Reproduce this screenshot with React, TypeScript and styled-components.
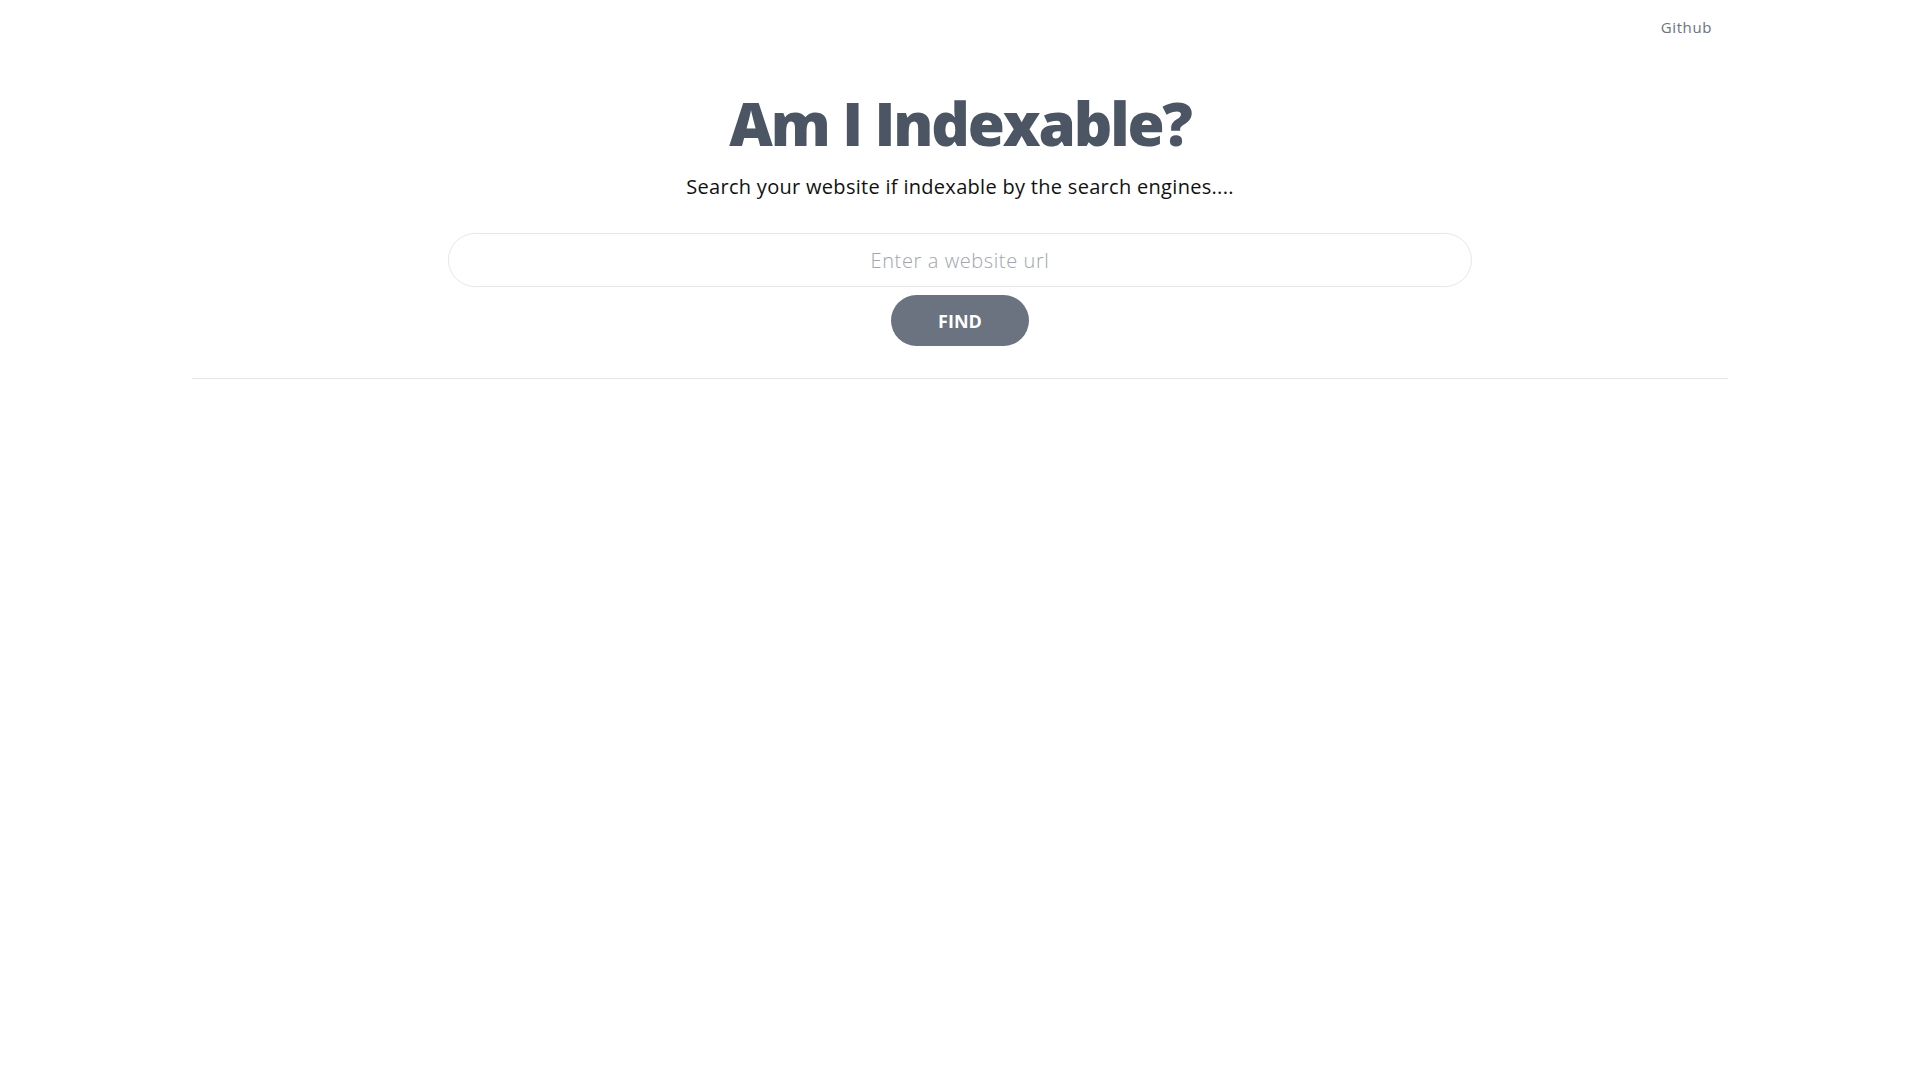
import React, { useState } from 'react'
import styled, { createGlobalStyle } from 'styled-components'

const GlobalStyle = createGlobalStyle`
  html, body {
    margin: 0;
    padding: 0;
    background: #ffffff;
    font-family: "Open Sans", "Noto Sans", sans-serif;
  }
  * {
    box-sizing: border-box;
  }
`

const Container = styled.div`
  width: 100%;
  max-width: 1536px;
  margin: 0 auto;
`

const Nav = styled(Container)`
  display: flex;
  justify-content: flex-end;
  padding: 15px 16px 0;
`

const NavLink = styled.a`
  color: #6b7280;
  font-size: 15px;
  line-height: 24px;
  letter-spacing: 0.04em;
  text-decoration: none;
`

const Hero = styled(Container)`
  display: flex;
  flex-direction: column;
  align-items: center;
  padding: 52px 16px 32px;
  border-bottom: 1px solid #e5e7eb;
`

const Title = styled.h1`
  margin: 0;
  color: #4b5563;
  font-size: 60px;
  font-weight: 800;
  line-height: 65px;
  letter-spacing: -0.035em;
`

const Subtitle = styled.p`
  margin: 17px 0 0;
  color: #111111;
  font-size: 20px;
  line-height: 28px;
  letter-spacing: 0.015em;
`

const SearchForm = styled.form`
  display: flex;
  flex-direction: column;
  align-items: center;
  gap: 8px;
  width: 100%;
  margin-top: 32px;
`

const UrlInput = styled.input`
  width: 1024px;
  height: 54px;
  padding: 0 24px;
  border: 1px solid #e5e7eb;
  border-radius: 9999px;
  outline: none;
  text-align: center;
  font-family: inherit;
  font-size: 20px;
  letter-spacing: 0.03em;
  color: #374151;

  &::placeholder {
    color: #a1a5ad;
    font-weight: 300;
  }
`

const FindButton = styled.button`
  width: 138px;
  height: 51px;
  border: none;
  border-radius: 9999px;
  background: #6b7280;
  color: #ffffff;
  font-family: inherit;
  font-size: 18px;
  font-weight: 700;
  cursor: pointer;
`

export default function App() {
  const [url, setUrl] = useState('')

  return (
    <>
      <GlobalStyle />
      <Nav>
        <NavLink href="#">Github</NavLink>
      </Nav>
      <Hero>
        <Title>Am I Indexable?</Title>
        <Subtitle>Search your website if indexable by the search engines....</Subtitle>
        <SearchForm onSubmit={(e) => e.preventDefault()}>
          <UrlInput
            type="text"
            placeholder="Enter a website url"
            value={url}
            onChange={(e) => setUrl(e.target.value)}
          />
          <FindButton type="submit">FIND</FindButton>
        </SearchForm>
      </Hero>
    </>
  )
}
